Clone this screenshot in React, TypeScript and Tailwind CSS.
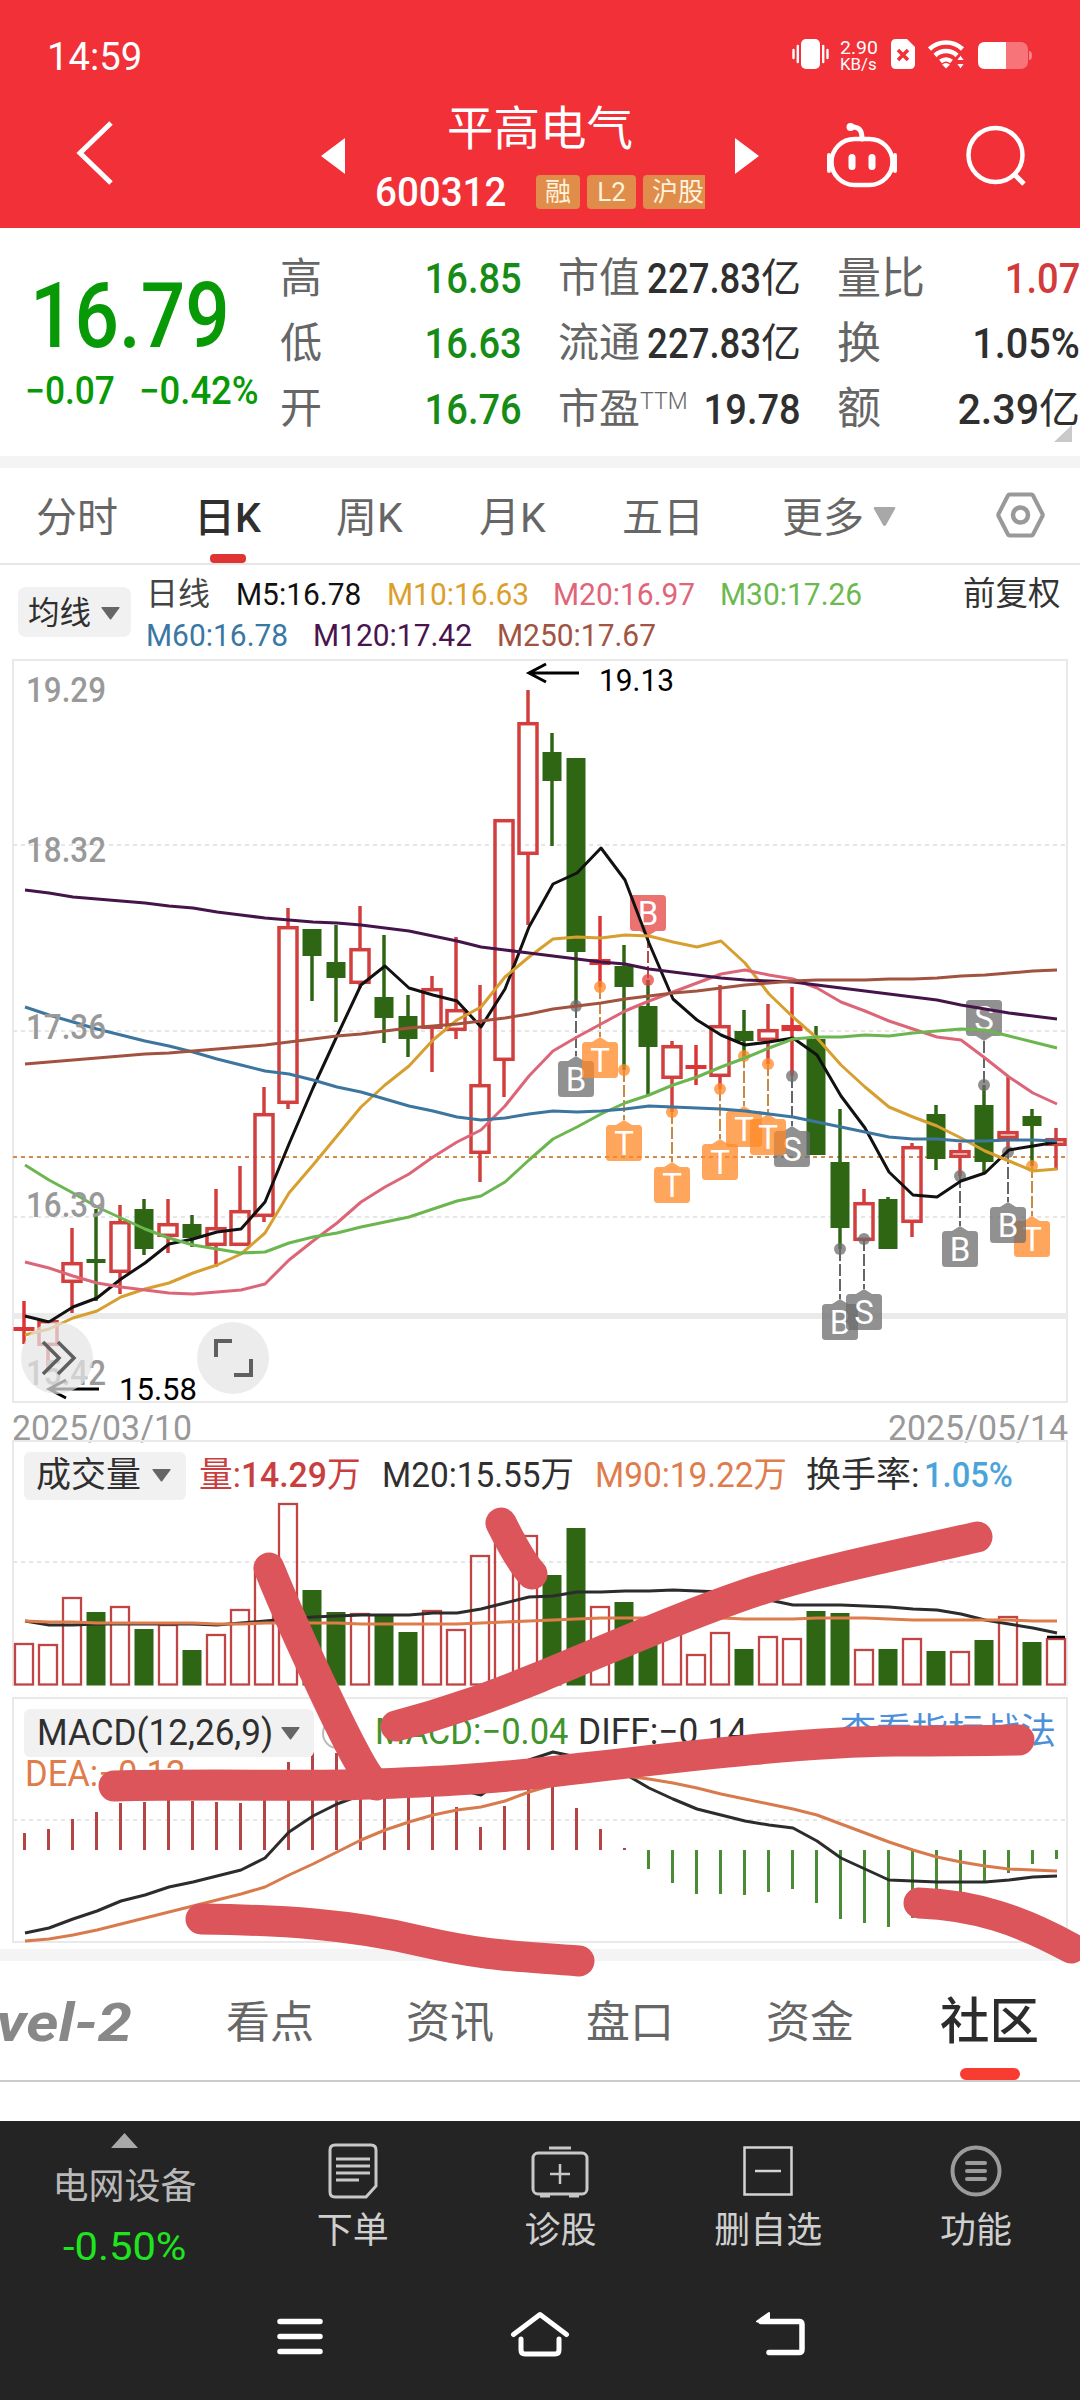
import React from "react";

type Candle = [high: number, top: number, bottom: number, low: number, kind: "r" | "g" | "f"];
type Marker = { i: number; y: number; label: string; kind: "gray" | "orange" | "red"; up?: boolean };

const RED = "#d23f3f";
const GREEN = "#2f6613";
const FONT = "Roboto, 'Noto Sans CJK SC', sans-serif";

// x of the i-th trading day, shared by the three charts
const px = (i: number) => 24 + i * 24;

const candles: Candle[] = [
  [1301, 1327, 1331, 1344, "f"], [1320, 1320, 1346, 1371, "r"], [1228, 1262, 1283, 1313, "r"], [1209, 1259, 1263, 1301, "g"],
  [1205, 1221, 1273, 1294, "r"], [1199, 1209, 1249, 1255, "g"], [1199, 1223, 1237, 1253, "r"], [1215, 1224, 1238, 1247, "g"],
  [1189, 1227, 1246, 1267, "r"], [1166, 1210, 1246, 1246, "r"], [1087, 1113, 1217, 1222, "r"], [908, 926, 1104, 1109, "r"],
  [929, 929, 956, 1001, "g"], [925, 962, 978, 1022, "g"], [906, 948, 984, 988, "r"], [935, 997, 1018, 1043, "g"],
  [995, 1016, 1039, 1057, "g"], [976, 988, 1029, 1072, "r"], [937, 1009, 1031, 1039, "r"], [985, 1084, 1154, 1182, "r"],
  [819, 819, 1061, 1097, "r"], [690, 722, 855, 925, "r"], [733, 752, 781, 846, "g"], [758, 758, 952, 1006, "g"],
  [916, 959, 965, 987, "f"], [945, 966, 987, 1070, "g"], [980, 1006, 1047, 1095, "g"], [1041, 1045, 1079, 1112, "r"],
  [1045, 1065, 1069, 1085, "f"], [985, 1025, 1077, 1089, "r"], [1010, 1031, 1041, 1057, "g"], [1004, 1029, 1041, 1064, "r"],
  [987, 1025, 1031, 1076, "f"], [1026, 1039, 1155, 1155, "g"], [1109, 1162, 1228, 1249, "g"], [1189, 1202, 1241, 1241, "r"],
  [1197, 1199, 1249, 1249, "g"], [1143, 1146, 1223, 1237, "r"], [1105, 1114, 1159, 1170, "g"], [1143, 1150, 1158, 1176, "r"],
  [1085, 1105, 1162, 1174, "g"], [1077, 1131, 1139, 1151, "r"], [1109, 1116, 1126, 1166, "g"], [1128, 1138, 1146, 1170, "r"],
];

const markers: Marker[] = [
  { i: 23, y: 1006, label: "B", kind: "gray" },
  { i: 24, y: 987, label: "T", kind: "orange" },
  { i: 25, y: 1070, label: "T", kind: "orange" },
  { i: 26, y: 980, label: "B", kind: "red", up: true },
  { i: 27, y: 1112, label: "T", kind: "orange" },
  { i: 29, y: 1089, label: "T", kind: "orange" },
  { i: 30, y: 1056, label: "T", kind: "orange" },
  { i: 32, y: 1076, label: "S", kind: "gray" },
  { i: 31, y: 1064, label: "T", kind: "orange" },
  { i: 34, y: 1249, label: "B", kind: "gray" },
  { i: 35, y: 1239, label: "S", kind: "gray" },
  { i: 39, y: 1176, label: "B", kind: "gray" },
  { i: 40, y: 1085, label: "S", kind: "gray", up: true },
  { i: 42, y: 1166, label: "T", kind: "orange" },
  { i: 41, y: 1152, label: "B", kind: "gray" },
];

const markerFill = { gray: "#6c6c6c", orange: "#ff8826", red: "#e54141" };
const markerLine = { gray: "#666666", orange: "#c98a45", red: "#b84a4a" };

const ma5 = [1316, 1322, 1307, 1298, 1279, 1263, 1244, 1239, 1232, 1229, 1202, 1144, 1088, 1036, 985, 966, 988, 995, 1001, 1027, 989, 927, 884, 873, 848, 880, 943, 999, 1020, 1035, 1045, 1042, 1038, 1055, 1096, 1128, 1172, 1195, 1197, 1181, 1173, 1150, 1146, 1142];
const ma10 = [1335, 1329, 1318, 1311, 1297, 1289, 1283, 1273, 1265, 1254, 1233, 1193, 1165, 1136, 1107, 1085, 1066, 1040, 1020, 1007, 977, 957, 939, 937, 938, 935, 936, 942, 947, 941, 963, 994, 1017, 1038, 1065, 1087, 1107, 1117, 1126, 1138, 1151, 1161, 1171, 1169];
const ma20 = [1262, 1268, 1276, 1283, 1287, 1290, 1293, 1294, 1292, 1290, 1284, 1260, 1241, 1223, 1202, 1187, 1174, 1157, 1142, 1130, 1106, 1076, 1051, 1037, 1024, 1011, 1001, 992, 983, 974, 970, 975, 979, 988, 1002, 1011, 1021, 1029, 1037, 1040, 1058, 1077, 1093, 1104];
const ma30 = [1165, 1180, 1193, 1207, 1218, 1229, 1238, 1245, 1249, 1253, 1252, 1243, 1237, 1233, 1227, 1222, 1217, 1209, 1201, 1196, 1182, 1160, 1139, 1127, 1114, 1103, 1095, 1085, 1077, 1067, 1058, 1048, 1039, 1037, 1037, 1035, 1036, 1033, 1031, 1029, 1030, 1036, 1042, 1048];
const ma60 = [1007, 1015, 1022, 1029, 1035, 1041, 1046, 1052, 1059, 1065, 1071, 1074, 1080, 1087, 1092, 1099, 1106, 1111, 1117, 1120, 1118, 1114, 1111, 1112, 1111, 1109, 1106, 1107, 1108, 1109, 1111, 1114, 1117, 1122, 1127, 1132, 1137, 1139, 1139, 1141, 1141, 1140, 1140, 1141];
const ma120 = [890, 893, 897, 899, 901, 903, 906, 908, 912, 915, 918, 920, 922, 923, 925, 928, 931, 936, 941, 947, 950, 953, 956, 959, 962, 964, 969, 972, 975, 978, 980, 981, 982, 985, 988, 991, 994, 997, 1000, 1005, 1009, 1013, 1016, 1019];
const ma250 = [1064, 1062, 1060, 1058, 1056, 1054, 1053, 1051, 1049, 1047, 1045, 1042, 1039, 1036, 1034, 1031, 1028, 1026, 1024, 1021, 1018, 1014, 1009, 1006, 1003, 999, 996, 993, 991, 988, 985, 983, 981, 980, 980, 980, 979, 979, 978, 976, 975, 973, 971, 970];

const volTops = [1644, 1645, 1598, 1612, 1607, 1629, 1625, 1650, 1635, 1610, 1568, 1504, 1590, 1612, 1614, 1615, 1632, 1611, 1630, 1556, 1536, 1536, 1575, 1528, 1607, 1602, 1625, 1631, 1655, 1633, 1649, 1637, 1639, 1611, 1613, 1650, 1649, 1639, 1651, 1652, 1640, 1617, 1642, 1639];
const volM20 = [1621, 1625, 1625, 1624, 1624, 1624, 1624, 1624, 1625, 1623, 1621, 1619, 1617, 1616, 1615, 1615, 1615, 1613, 1613, 1609, 1603, 1597, 1596, 1592, 1592, 1591, 1591, 1590, 1591, 1592, 1595, 1600, 1605, 1605, 1605, 1606, 1607, 1609, 1610, 1614, 1620, 1624, 1628, 1633];
const volM90 = [1621, 1622, 1622, 1623, 1623, 1623, 1623, 1623, 1624, 1624, 1623, 1623, 1623, 1623, 1624, 1624, 1624, 1624, 1624, 1623, 1622, 1621, 1620, 1619, 1618, 1618, 1618, 1618, 1618, 1618, 1619, 1619, 1619, 1618, 1618, 1618, 1619, 1620, 1620, 1620, 1620, 1620, 1621, 1621];

const macdEnds = [1833, 1829, 1819, 1812, 1803, 1802, 1799, 1801, 1802, 1803, 1790, 1762, 1752, 1753, 1765, 1780, 1788, 1795, 1807, 1827, 1806, 1785, 1780, 1808, 1829, 1848, 1869, 1883, 1894, 1894, 1895, 1892, 1889, 1903, 1919, 1923, 1927, 1918, 1910, 1898, 1883, 1873, 1864, 1859];
const diff = [1933, 1928, 1919, 1911, 1901, 1895, 1887, 1882, 1876, 1870, 1858, 1832, 1816, 1804, 1795, 1788, 1785, 1785, 1789, 1795, 1778, 1760, 1752, 1757, 1765, 1774, 1788, 1799, 1809, 1815, 1821, 1825, 1828, 1841, 1858, 1869, 1880, 1881, 1882, 1882, 1882, 1880, 1877, 1876];
const dea = [1941, 1939, 1935, 1930, 1924, 1918, 1912, 1906, 1900, 1894, 1887, 1875, 1864, 1852, 1840, 1830, 1822, 1815, 1810, 1807, 1801, 1792, 1785, 1779, 1776, 1776, 1779, 1783, 1788, 1794, 1799, 1804, 1809, 1815, 1824, 1833, 1842, 1850, 1857, 1862, 1866, 1869, 1870, 1871];

const Curve = ({ ys, color, w = 3 }: { ys: number[]; color: string; w?: number }) => (
  <polyline points={ys.map((y, i) => `${px(i) + 1},${y}`).join(" ")} fill="none" stroke={color} strokeWidth={w} strokeLinejoin="round" />
);

const Dashed = ({ y, color = "#e6e6e6" }: { y: number; color?: string }) => (
  <line x1="13" x2="1067" y1={y} y2={y} stroke={color} strokeWidth="2" strokeDasharray="4 4" />
);

const Caret = ({ color = "#666" }: { color?: string }) => (
  <svg width="19" height="13" viewBox="0 0 19 13" className="shrink-0">
    <path d="M1 0h17q1 0 .5 1L10.300 12q-.8 1-1.600 0L.5 1Q0 0 1 0Z" fill={color} />
  </svg>
);

const StatusBar = () => (
  <div className="flex h-[104px] items-start pt-[39px] pl-[47px] text-white">
    <div className="w-[745px] text-[39px] leading-[36px]">
      <span className="inline-block origin-left scale-x-[0.98]">14:59</span>
    </div>
    <svg width="37" height="30" viewBox="0 0 37 30" className="mr-[11px]">
      <rect x="9" width="19" height="30" rx="5" fill="#fff" />
      <path d="M1.500 11v8M5.800 7v16M31.200 7v16M35.500 11v8" stroke="#fff" strokeWidth="2.400" strokeLinecap="round" />
    </svg>
    <div className="flex w-[51px] flex-col items-start text-[16px] leading-[17px]">
      <span className="h-[17px] origin-left scale-x-[1.08] text-[18px]">2.90</span>
      <span className="h-[17px] origin-left scale-x-[1.05]">KB/s</span>
    </div>
    <svg width="24" height="30" viewBox="0 0 24 30" className="mr-[13px]">
      <path d="M5 0h11l8 8v17q0 5-5 5H5q-5 0-5-5V5q0-5 5-5Z" fill="#fff" />
      <path d="m7 11 10 10M17 11 7 21" stroke="#f13038" strokeWidth="3.500" />
    </svg>
    <svg width="38" height="30" viewBox="0 0 38 30" className="mr-[12px]" fill="none" stroke="#fff" strokeWidth="4.500">
      <path d="M1.500 10a24 24 0 0 1 33 0M7 16.500a16 16 0 0 1 22 0" />
      <path d="M12.500 22.500a8.500 8.500 0 0 1 11 0" />
      <path d="m14 25.500 4 4 4-4q-4-3-8 0Z" fill="#fff" stroke="none" />
      <path d="m32.500 16-4 5.500h8zM32.500 30l-4-5.500h8z" fill="#fff" stroke="#f13038" strokeWidth="1" />
    </svg>
    <svg width="54" height="28" viewBox="0 0 54 28" className="mt-[3px]">
      <rect width="50" height="27" rx="7" fill="#f9868a" fillOpacity="0.8" />
      <path d="M51 9q3 0 3 4.500T51 18Z" fill="#f9868a" />
      <path d="M28 0H7Q0 0 0 7v13q0 7 7 7h21Z" fill="#fff" />
    </svg>
  </div>
);

const Header = () => (
  <header className="h-[228px] bg-[#f13038]">
    <StatusBar />
    <div className="flex h-[124px] items-start text-white">
      <svg width="40" height="66" viewBox="0 0 40 66" className="mt-[16px] ml-[75px] mr-[206px]" fill="none" stroke="#fff" strokeWidth="5">
        <path d="M36 3 5 33l31 30" />
      </svg>
      <svg width="24" height="36" viewBox="0 0 24 36" className="mt-[34px]">
        <path d="M24 0v36L0 18Z" fill="#fff" />
      </svg>
      <div className="flex w-[390px] flex-col items-center">
        <h1 className="text-[46.500px] leading-[50px]">平高电气</h1>
        <div className="mt-[20px] flex h-[36px] w-[330px] items-center">
          <span className="inline-block w-[161px] origin-left scale-x-[0.94] text-[41px] leading-none font-medium">600312</span>
          <div className="flex gap-[7px] overflow-hidden text-[26px] leading-[35px] text-[#fdf3dc]">
            <span className="h-[34px] w-[44px] rounded-[4px] bg-[#e08c4a] text-center">融</span>
            <span className="h-[34px] w-[49px] rounded-[4px] bg-[#e08c4a] text-center">L2</span>
            <span className="h-[34px] w-[62px] rounded-l-[4px] bg-[#e08c4a] pl-[9px] whitespace-nowrap">沪股</span>
          </div>
        </div>
      </div>
      <svg width="24" height="36" viewBox="0 0 24 36" className="mt-[34px]">
        <path d="M0 0v36L24 18Z" fill="#fff" />
      </svg>
      <svg width="72" height="66" viewBox="0 0 72 66" className="mt-[18px] ml-[67px]" fill="none" stroke="#fff">
        <path d="M36 17c0-8-2-11-8-12" strokeWidth="5" strokeLinecap="round" />
        <circle cx="24.500" cy="5" r="4" fill="#fff" stroke="none" />
        <rect x="5.500" y="17" width="61" height="46" rx="23" strokeWidth="4.500" />
        <path d="M3 33v16M69 33v16" strokeWidth="4" strokeLinecap="round" />
        <path d="M26 35.500v9M46 35.500v9" strokeWidth="7" strokeLinecap="round" />
      </svg>
      <svg width="62" height="62" viewBox="0 0 62 62" className="mt-[20px] ml-[67px]" fill="none" stroke="#fff" strokeWidth="4.500">
        <circle cx="30.500" cy="31" r="27" />
        <path d="m49 50 10 10" strokeWidth="5" />
      </svg>
    </div>
  </header>
);

const Value = ({ num, unit }: { num: string; unit?: string }) => (
  <span className="flex items-center justify-end text-[43px] leading-none font-medium">
    <span className="inline-block origin-right scale-x-[0.885]">{num}</span>
    {unit && <span className="text-[40px] font-normal">{unit}</span>}
  </span>
);

const QuotePanel = () => (
  <section className="flex h-[228px] pt-[18px] text-[#2f2f2f]">
    <div className="w-[280px] text-[#089a06]">
      <div className="mt-[24px] pl-[30px] text-[91px] leading-[92px] font-medium">
        <span className="inline-block origin-left scale-x-[0.86]">16.79</span>
      </div>
      <div className="mt-[9px] flex pl-[25px] text-[38px] leading-[40px] font-medium">
        <span className="w-[114px]">
          <span className="inline-block origin-left scale-x-[0.93]">−0.07</span>
        </span>
        <span className="inline-block origin-left scale-x-[0.96]">−0.42%</span>
      </div>
    </div>
    <div className="grid h-[196px] w-[242px] grid-cols-[auto_1fr] grid-rows-3 items-center text-[42px] leading-none text-[#666]">
      <span>高</span>
      <span className="text-[#168c16]"><Value num="16.85" /></span>
      <span>低</span>
      <span className="text-[#168c16]"><Value num="16.63" /></span>
      <span>开</span>
      <span className="text-[#168c16]"><Value num="16.76" /></span>
    </div>
    <div className="ml-[36px] grid h-[196px] w-[243px] grid-cols-[auto_1fr] grid-rows-3 items-center text-[41px] leading-none text-[#666]">
      <span className="w-[60px] whitespace-nowrap">市值</span>
      <span className="text-[#2f2f2f]">
        <span className="flex items-center justify-end text-[43px] leading-none font-medium">
          <span className="inline-block origin-right scale-x-[0.85]">227.83</span>
          <span className="text-[40px] font-normal">亿</span>
        </span>
      </span>
      <span className="w-[60px] whitespace-nowrap">流通</span>
      <span className="text-[#2f2f2f]">
        <span className="flex items-center justify-end text-[43px] leading-none font-medium">
          <span className="inline-block origin-right scale-x-[0.85]">227.83</span>
          <span className="text-[40px] font-normal">亿</span>
        </span>
      </span>
      <span className="flex w-[60px] whitespace-nowrap">
        市盈<span className="text-[23px] leading-[25px] font-light">TTM</span>
      </span>
      <span className="text-[#2f2f2f]"><Value num="19.78" /></span>
    </div>
    <div className="relative ml-[36px] grid h-[196px] w-[243px] grid-cols-[auto_1fr] grid-rows-3 items-center text-[44px] leading-none text-[#666]">
      <span>量比</span>
      <span className="text-[#d23b3b]"><Value num="1.07" /></span>
      <span>换</span>
      <span className="text-[#2f2f2f]">
        <span className="flex justify-end text-[43px] leading-none font-medium">
          <span className="inline-block origin-right scale-x-[0.92]">1.05%</span>
        </span>
      </span>
      <span>额</span>
      <span className="text-[#2f2f2f]">
        <span className="flex items-center justify-end text-[43px] leading-none font-medium">
          <span className="inline-block origin-right scale-x-[0.96]">2.39</span>
          <span className="text-[41px] font-normal">亿</span>
        </span>
      </span>
      <svg width="18" height="17" viewBox="0 0 18 17" className="absolute right-[8px] bottom-0">
        <path d="M18 0v17H0Z" fill="#c9c9c9" />
      </svg>
    </div>
  </section>
);

const PeriodTabs = () => (
  <nav className="flex h-[97px] items-center border-b-2 border-[#e6e6e6] pt-[5px] pl-[36px] text-[41px] leading-none text-[#666]">
    <span className="w-[158px]">分时</span>
    <span className="relative flex h-full w-[142px] items-center font-medium text-[#2f2f2f]">
      日K
      <i className="absolute bottom-0 left-[16px] h-[9px] w-[36px] rounded-[4px] bg-[#e03434]" />
    </span>
    <span className="w-[143px]">周K</span>
    <span className="w-[143px]">月K</span>
    <span className="w-[160px]">五日</span>
    <span className="flex w-[214px] items-center gap-[9px]">
      更多
      <svg width="23" height="19" viewBox="0 0 23 19" className="-mt-[4px]"><path d="M2 0h19q2 0 1 2L13 18q-1.500 2-3 0L1 2Q0 0 2 0Z" fill="#a8a8a8" /></svg>
    </span>
    <svg width="49" height="46" viewBox="0 0 49 46" className="-mt-[6px]" fill="none" stroke="#999" strokeWidth="4">
      <path d="M13.500 2.500h22q1 0 1.500 1L46.500 22q.5 1 0 2L37 42.500q-.5 1-1.500 1h-22q-1 0-1.500-1L2.500 24q-.5-1 0-2L12 3.500q.5-1 1.500-1Z" />
      <circle cx="24.500" cy="23" r="7.500" strokeWidth="4.500" />
    </svg>
  </nav>
);

const AverageLegend = () => (
  <section className="flex h-[93px] pt-[9px] pl-[18px] text-[32px] leading-[41px]">
    <button className="mt-[13px] mr-[15px] flex h-[50px] w-[113px] items-center gap-[10px] rounded-[8px] bg-[#f1f1f1] pt-[2px] pl-[10px] text-[31.500px] text-[#2f2f2f]">
      均线
      <Caret />
    </button>
    <div className="w-[817px] whitespace-nowrap">
      <div className="flex">
        <span className="w-[90px] text-[#444]">日线</span>
        <span className="w-[151px] text-[#111]"><span className="inline-block origin-left scale-x-[0.935]">M5:16.78</span></span>
        <span className="w-[166px] text-[#dc9f2b]"><span className="inline-block origin-left scale-x-[0.935]">M10:16.63</span></span>
        <span className="w-[167px] text-[#df6577]"><span className="inline-block origin-left scale-x-[0.935]">M20:16.97</span></span>
        <span className="text-[#6bb94f]"><span className="inline-block origin-left scale-x-[0.935]">M30:17.26</span></span>
      </div>
      <div className="flex">
        <span className="w-[167px] text-[#3a77a3]"><span className="inline-block origin-left scale-x-[0.935]">M60:16.78</span></span>
        <span className="w-[184px] text-[#4a154f]"><span className="inline-block origin-left scale-x-[0.935]">M120:17.42</span></span>
        <span className="text-[#a15443]"><span className="inline-block origin-left scale-x-[0.935]">M250:17.67</span></span>
      </div>
    </div>
    <span className="text-[32.500px] text-[#333]">前复权</span>
  </section>
);

const TradeMarker = ({ m }: { m: Marker }) => {
  const x = px(m.i);
  const top = m.up ? m.y - 85 : m.y + 55;
  const line = m.up ? [m.y - 44, m.y] : [m.y, m.y + 50];
  const tip = m.up
    ? `M${x - 8} ${top + 36}L${x} ${top + 41}L${x + 8} ${top + 36}Z`
    : `M${x - 8} ${top}L${x} ${top - 5}L${x + 8} ${top}Z`;
  return (
    <g>
      <line x1={x} x2={x} y1={line[0]} y2={line[1]} stroke={markerLine[m.kind]} strokeWidth="2" strokeDasharray="12 3" />
      <g fill={markerFill[m.kind]} fillOpacity="0.75">
        <circle cx={x} cy={m.y} r="6" />
        <path d={tip} />
        <rect x={x - 18} y={top} width="36" height="36" rx="3.500" />
      </g>
      <text x={x} y={top + 30} textAnchor="middle" fontSize="33" fill="#fff" fontFamily={FONT}>{m.label}</text>
    </g>
  );
};

const KLineChart = () => (
  <svg width="1080" height="782" viewBox="0 658 1080 782" className="relative block overflow-visible" fontFamily={FONT}>
    <rect x="13" y="660" width="1054" height="742" fill="none" stroke="#e9e9e9" strokeWidth="2" />
    <Dashed y={845} />
    <Dashed y={1031} />
    <Dashed y={1217} />
    <line x1="13" x2="1067" y1="1316" y2="1316" stroke="#ebebeb" strokeWidth="6" />
    <Dashed y={1157} color="#cf8a4d" />
    {candles.map(([h, t, b, l, kind], i) => {
      const x = px(i);
      const color = kind === "g" ? GREEN : kind === "f" ? "#dc3535" : RED;
      return (
        <g key={i} stroke={color} strokeWidth="3.500">
          {h < t && <line x1={x} x2={x} y1={h} y2={t} />}
          {l > b && <line x1={x} x2={x} y1={b} y2={l} />}
          {kind === "r" ? (
            <rect x={x - 9} y={t + 1.7} width="18" height={b - t - 3.4} fill="none" />
          ) : (
            <rect x={kind === "g" ? x - 9.5 : x - 10.5} y={t} width={kind === "g" ? 19 : 21} height={b - t} fill={color} stroke="none" />
          )}
        </g>
      );
    })}
    {markers.map((m) => <TradeMarker key={m.i} m={m} />)}
    <Curve ys={ma5} color="#111111" />
    <Curve ys={ma10} color="#d79f2f" />
    <Curve ys={ma20} color="#dc6678" />
    <Curve ys={ma30} color="#6cb650" />
    <Curve ys={ma60} color="#3c769f" />
    <Curve ys={ma120} color="#451549" />
    <Curve ys={ma250} color="#a2533f" />

    <g fontSize="35" fill="#999" fontWeight="500">
      <text x="26" y="702" textLength="80" lengthAdjust="spacingAndGlyphs">19.29</text>
      <text x="26" y="862" textLength="80" lengthAdjust="spacingAndGlyphs">18.32</text>
      <text x="26" y="1039" textLength="80" lengthAdjust="spacingAndGlyphs">17.36</text>
      <text x="26" y="1217" textLength="80" lengthAdjust="spacingAndGlyphs">16.39</text>
      <text x="26" y="1385" textLength="80" lengthAdjust="spacingAndGlyphs">15.42</text>
      <text x="12" y="1439.500" textLength="180" lengthAdjust="spacingAndGlyphs" fontWeight="400">2025/03/10</text>
      <text x="888" y="1439.500" textLength="180" lengthAdjust="spacingAndGlyphs" fontWeight="400">2025/05/14</text>
    </g>
    <g fill="none" stroke="#000" strokeWidth="3">
      <path d="M579 673h-50M546 664l-17 9 17 9" />
      <path d="M99 1389H49M66 1380l-17 9 17 9" />
    </g>
    <g fontSize="31" fill="#000">
      <text x="599" y="691" textLength="75" lengthAdjust="spacingAndGlyphs">19.13</text>
      <text x="119" y="1400" textLength="78" lengthAdjust="spacingAndGlyphs">15.58</text>
    </g>

    <g fill="#e4e4e4" fillOpacity="0.72">
      <circle cx="57" cy="1358" r="36" />
      <circle cx="233" cy="1358" r="36" />
    </g>
    <g fill="none" stroke="#5f5f5f" strokeWidth="4">
      <path d="m43 1342 16 16-16 16M58 1342l16 16-16 16" strokeWidth="3.500" />
      <path d="M232 1341h-16v16M251 1359v16h-17" />
    </g>
  </svg>
);

const VolumePanel = () => (
  <section className="relative h-[257px]">
    <svg width="1080" height="257" viewBox="0 1440 1080 257" className="absolute inset-0">
      <path d="M13 1686V1441H1067V1686" fill="none" stroke="#e9e9e9" strokeWidth="2" />
      <Dashed y={1562} />
      {volTops.map((top, i) => {
        const green = candles[i][4] === "g";
        return green ? (
          <rect key={i} x={px(i) - 9.5} y={top} width="19" height={1685.5 - top} fill={GREEN} />
        ) : (
          <rect key={i} x={px(i) - 9} y={top} width="18" height={1684.500 - top} fill="none" stroke="#c04545" strokeWidth="2.300" />
        );
      })}
      <line x1="1047" x2="1065" y1="1637" y2="1637" stroke="#000" strokeWidth="2.500" />
      <Curve ys={volM20} color="#2c2c2c" />
      <Curve ys={volM90} color="#df7c4c" />
    </svg>
    <div className="relative flex h-[71px] items-center pl-[24px] text-[35.500px] leading-none whitespace-nowrap text-[#2f2f2f]">
      <button className="mr-[13px] flex h-[48px] w-[162px] items-center gap-[11px] rounded-[6px] bg-[#f1f1f1] pl-[12px] text-[35px]">
        成交量
        <Caret />
      </button>
      <span className="w-[183px] text-[#c93e3e]">
        <span className="inline-block origin-left scale-x-[0.95]">量:<b className="font-medium">14.29</b>万</span>
      </span>
      <span className="w-[213px]">
        <span className="inline-block origin-left scale-x-[0.94]">M20:15.55万</span>
      </span>
      <span className="w-[211px] text-[#df7c4c]">
        <span className="inline-block origin-left scale-x-[0.94]">M90:19.22万</span>
      </span>
      <span className="w-[118px] text-[35px]">换手率:</span>
      <span className="inline-block origin-left scale-x-[0.92] font-medium text-[#4ba4d9]">1.05%</span>
    </div>
  </section>
);

const MacdPanel = () => (
  <section className="relative h-[252px]">
    <svg width="1080" height="252" viewBox="0 1697 1080 252" className="absolute inset-0">
      <rect x="13" y="1698" width="1054" height="244" fill="none" stroke="#e9e9e9" strokeWidth="2" />
      <Dashed y={1820} />
      {macdEnds.map((end, i) => (
        <line key={i} x1={px(i) + 0.5} x2={px(i) + 0.5} y1="1850" y2={end} stroke={end < 1850 ? "#b54444" : "#4a8c35"} strokeWidth="3" />
      ))}
      <Curve ys={diff} color="#2c2c2c" />
      <Curve ys={dea} color="#d97a4d" />
    </svg>
    <div className="relative flex h-[60px] items-end pl-[24px] text-[36px] leading-[50px] whitespace-nowrap text-[#2f2f2f]">
      <button className="flex h-[48px] w-[290px] items-center rounded-[6px] bg-[#f1f1f1] pl-[12px]">
        <span className="w-[245px]">
          <span className="inline-block origin-left scale-x-[0.975]">MACD(12,26,9)</span>
        </span>
        <Caret />
      </button>
      <span className="mr-[22px] mb-[8px] ml-[8px] h-[31px] w-[31px] rounded-full border-2 border-[#bbb] text-center text-[22px] leading-[27px] text-[#bbb]">?</span>
      <span className="w-[203px] text-[#3f942c]">
        <span className="inline-block origin-left scale-x-[0.96]">MACD:−0.04</span>
      </span>
      <span className="w-[262px]">
        <span className="inline-block origin-left scale-x-[0.98]">DIFF:−0.14</span>
      </span>
      <span className="text-[#4d90d8]">查看指标战法</span>
    </div>
    <div className="relative pl-[25px] text-[36px] leading-[34px] text-[#df7c4c]">
      <span className="inline-block origin-left scale-x-[0.96]">DEA:−0.12</span>
    </div>
  </section>
);

const InfoTabs = () => (
  <nav className="flex h-[121px] items-center overflow-hidden border-b-2 border-[#cbcbcb] pt-[4px] text-[44px] leading-none whitespace-nowrap text-[#666]">
    <span className="flex w-[226px] shrink-0">
      <span className="flex w-[132px] shrink-0 origin-right scale-x-[1.14] justify-end text-[54px] font-bold text-[#888] italic">Level-2</span>
    </span>
    <span className="w-[180px] shrink-0">看点</span>
    <span className="w-[180px] shrink-0">资讯</span>
    <span className="w-[180px] shrink-0">盘口</span>
    <span className="w-[174px] shrink-0">资金</span>
    <span className="relative flex h-full items-center text-[49.500px] font-medium text-[#2c2c2c]">
      社区
      <i className="absolute bottom-0 left-[20px] h-[12px] w-[60px] rounded-[6px] bg-[#f93c31]" />
    </span>
  </nav>
);

const tools = [
  {
    name: "下单",
    icon: (
      <svg width="50" height="56" viewBox="0 0 50 56" fill="none" stroke="#c8c8c8" strokeWidth="3">
        <path d="M7 2h36q5 0 5 5v36L38 54H7q-5 0-5-5V7q0-5 5-5Z" />
        <path d="M8 16h34M8 23h34M8 30h34M8 37h23" />
      </svg>
    ),
  },
  {
    name: "诊股",
    icon: (
      <svg width="58" height="56" viewBox="0 0 58 56" fill="none" stroke="#c8c8c8" strokeWidth="3">
        <rect x="2" y="10" width="54" height="41" rx="5" />
        <path d="M18 5h22M9 53h10M38 53h10" />
        <path d="M29 21v20M19 31h20" strokeWidth="2.500" />
      </svg>
    ),
  },
  {
    name: "删自选",
    icon: (
      <svg width="50" height="56" viewBox="0 0 50 56" fill="none" stroke="#d4d4d4" strokeWidth="2.500">
        <rect x="1.500" y="4.500" width="47" height="47" />
        <path d="M12 28h26" />
      </svg>
    ),
  },
  {
    name: "功能",
    icon: (
      <svg width="52" height="56" viewBox="0 0 52 56" fill="none" stroke="#9b9b9b" strokeWidth="4">
        <circle cx="26" cy="28" r="23.500" />
        <path d="M17 20h18M17 28h18M17 36h18" strokeLinecap="round" />
      </svg>
    ),
  },
];

const BottomBar = () => (
  <footer className="h-[279px] bg-[#242424]">
    <div className="flex h-[158px] text-[36px] text-[#cfcfcf]">
      <div className="flex w-[249px] flex-col items-center pt-[12px] leading-none text-[#b9b9b9]">
        <svg width="27" height="15" viewBox="0 0 27 15"><path d="M13.500 0 27 15H0Z" fill="#a9a9a9" /></svg>
        <span className="mt-[21px]">电网设备</span>
        <span className="mt-[22px] text-[39px] leading-[41px] text-[#1fe51f]">
          <span className="inline-block scale-x-[1.07]">-0.50%</span>
        </span>
      </div>
      {tools.map((t) => (
        <div key={t.name} className="flex w-[208px] flex-col items-center pt-[22px] leading-none">
          {t.icon}
          <span className="mt-[14px]">{t.name}</span>
        </div>
      ))}
    </div>
    <div className="flex items-center pt-[32px] pl-[277px]">
      <svg width="46" height="46" viewBox="0 0 46 46" stroke="#fff" strokeWidth="5.500" strokeLinecap="round">
        <path d="M3 10.500h40M3 25.500h40M3 40.500h40" />
      </svg>
      <svg width="60" height="46" viewBox="0 0 60 46" className="ml-[187px]" fill="none" stroke="#fff" strokeWidth="5" strokeLinecap="round" strokeLinejoin="round">
        <path d="M3.500 23.500 30 3.500l26.500 20M11 28v11q0 4 4 4h30q4 0 4-4V28" />
      </svg>
      <svg width="50" height="46" viewBox="0 0 50 46" className="ml-[186px]" fill="none" stroke="#fff" strokeWidth="5.500" strokeLinecap="round">
        <path d="M5 10.500h38q3 0 3 3v25q0 3-3 3H13" />
        <path d="m13 2-12 8.500h12z" fill="#fff" strokeWidth="2" strokeLinejoin="round" />
      </svg>
    </div>
  </footer>
);

// Free-hand notes drawn over the lower charts
const Scribbles = () => (
  <svg width="1080" height="500" viewBox="0 1490 1080 500" className="pointer-events-none absolute top-[1490px] left-0" fill="none" stroke="#db555a" strokeWidth="31" strokeLinecap="round" strokeLinejoin="round">
    <path d="M269 1568Q290 1620 328 1700T376 1785" />
    <path d="M501 1523Q520 1561 532 1574" />
    <path d="M396 1726C450 1712 490 1697 540 1677C620 1644 680 1617 750 1593C820 1570 890 1557 977 1537" />
    <path d="M114 1786C200 1784 280 1786 344 1785C440 1782 480 1779 540 1773C680 1757 800 1742 895 1741Q960 1741 1019 1740" />
    <path d="M201 1919C280 1920 350 1924 420 1941C490 1957 520 1956 579 1961" />
    <path d="M919 1903C975 1905 1020 1920 1071 1948" />
  </svg>
);

const App: React.FC = () => {
  return (
    <div className="relative h-[2400px] w-[1080px] overflow-hidden bg-white font-['Roboto','Noto_Sans_CJK_SC',sans-serif]">
      <Header />
      <QuotePanel />
      <div className="h-[12px] bg-[#f4f4f4]" />
      <PeriodTabs />
      <AverageLegend />
      <KLineChart />
      <VolumePanel />
      <MacdPanel />
      <div className="h-[12px] bg-[#f4f4f4]" />
      <InfoTabs />
      <div className="h-[39px]" />
      <BottomBar />
      <Scribbles />
    </div>
  );
};
export default App;
